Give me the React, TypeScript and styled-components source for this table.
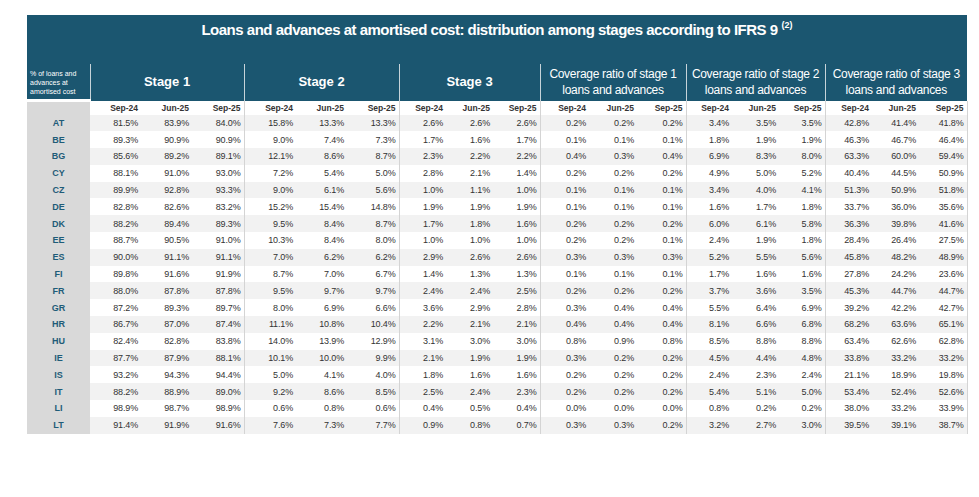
import React from "react";
import styled, { createGlobalStyle } from "styled-components";

const GlobalStyle = createGlobalStyle`
  html, body {
    margin: 0;
    padding: 0;
    background: #ffffff;
  }
  body {
    font-family: "Liberation Sans", Arial, sans-serif;
  }
`;

const HEAD_BG = "#1b5670";
const RULE = "#d4d4d4";

const Page = styled.div`
  padding: 15px 0 0 27px;
`;

const Table = styled.table`
  border-collapse: collapse;
  table-layout: fixed;
  width: 940px;
`;

const TitleCell = styled.th`
  background: ${HEAD_BG};
  color: #ffffff;
  height: 43px;
  padding: 6px 0 0 0;
  font-size: 15px;
  line-height: 18px;
  font-weight: 700;
  letter-spacing: -0.5px;
  text-align: center;
  vertical-align: top;

  sup {
    font-size: 9px;
    line-height: 0;
    letter-spacing: 0;
    margin-left: 4px;
    vertical-align: 7px;
  }
`;

const CornerCell = styled.th`
  background: ${HEAD_BG};
  color: #ffffff;
  height: 32px;
  padding: 0 0 3px 3px;
  font-size: 7px;
  font-weight: 400;
  line-height: 9px;
  text-align: left;
  vertical-align: bottom;
  border-bottom: 3px solid #ffffff;
`;

const GroupCell = styled.th<{ $wrap?: boolean }>`
  background: ${HEAD_BG};
  color: #ffffff;
  padding: 0;
  font-size: ${(p) => (p.$wrap ? "12px" : "13px")};
  font-weight: ${(p) => (p.$wrap ? 400 : 700)};
  letter-spacing: ${(p) => (p.$wrap ? "-0.3px" : "0")};
  line-height: 16px;
  text-align: center;
  vertical-align: middle;
  border-left: 1px solid #c7d3d9;
  &:first-of-type {
    border-left: none;
  }
`;

const SubRow = styled.tr`
  height: 14px;
`;

const SubCell = styled.th<{ $edge?: boolean }>`
  padding: 0 3px 0 0;
  font-size: 8.5px;
  font-weight: 700;
  color: #333333;
  text-align: right;
  vertical-align: middle;
  border-left: ${(p) => (p.$edge ? `1px solid ${RULE}` : "none")};
  &:last-child {
    border-right: 1px solid ${RULE};
  }
`;

const LabelBlank = styled.th`
  background: #d9d9d9;
  padding: 0;
`;

const Row = styled.tr<{ $shade: boolean }>`
  height: 16.8px;
  background: ${(p) => (p.$shade ? "#f2f2f2" : "#ffffff")};
`;

const Country = styled.th`
  background: #d9d9d9;
  color: #1f5c78;
  font-size: 9px;
  font-weight: 700;
  text-align: center;
  padding: 0;
  vertical-align: middle;
`;

const Value = styled.td<{ $edge?: boolean }>`
  padding: 0 3px 0 0;
  font-size: 9px;
  letter-spacing: -0.15px;
  color: #333333;
  text-align: right;
  vertical-align: middle;
  white-space: nowrap;
  border-left: ${(p) => (p.$edge ? `1px solid ${RULE}` : "none")};
  &:last-child {
    border-right: 1px solid ${RULE};
  }
`;

const colWidths = [
  63,
  51, 51, 52,
  52, 51, 52,
  47, 47, 47,
  49, 48, 49,
  46, 47, 46,
  47, 47, 48,
];

const groups: { label: React.ReactNode; wrap?: boolean }[] = [
  { label: "Stage 1" },
  { label: "Stage 2" },
  { label: "Stage 3" },
  { label: <>Coverage ratio of stage 1<br />loans and advances</>, wrap: true },
  { label: <>Coverage ratio of stage 2<br />loans and advances</>, wrap: true },
  { label: <>Coverage ratio of stage 3<br />loans and advances</>, wrap: true },
];

const periods = ["Sep-24", "Jun-25", "Sep-25"];

const rows: [string, number[]][] = [
  ["AT", [81.5, 83.9, 84.0, 15.8, 13.3, 13.3, 2.6, 2.6, 2.6, 0.2, 0.2, 0.2, 3.4, 3.5, 3.5, 42.8, 41.4, 41.8]],
  ["BE", [89.3, 90.9, 90.9, 9.0, 7.4, 7.3, 1.7, 1.6, 1.7, 0.1, 0.1, 0.1, 1.8, 1.9, 1.9, 46.3, 46.7, 46.4]],
  ["BG", [85.6, 89.2, 89.1, 12.1, 8.6, 8.7, 2.3, 2.2, 2.2, 0.4, 0.3, 0.4, 6.9, 8.3, 8.0, 63.3, 60.0, 59.4]],
  ["CY", [88.1, 91.0, 93.0, 7.2, 5.4, 5.0, 2.8, 2.1, 1.4, 0.2, 0.2, 0.2, 4.9, 5.0, 5.2, 40.4, 44.5, 50.9]],
  ["CZ", [89.9, 92.8, 93.3, 9.0, 6.1, 5.6, 1.0, 1.1, 1.0, 0.1, 0.1, 0.1, 3.4, 4.0, 4.1, 51.3, 50.9, 51.8]],
  ["DE", [82.8, 82.6, 83.2, 15.2, 15.4, 14.8, 1.9, 1.9, 1.9, 0.1, 0.1, 0.1, 1.6, 1.7, 1.8, 33.7, 36.0, 35.6]],
  ["DK", [88.2, 89.4, 89.3, 9.5, 8.4, 8.7, 1.7, 1.8, 1.6, 0.2, 0.2, 0.2, 6.0, 6.1, 5.8, 36.3, 39.8, 41.6]],
  ["EE", [88.7, 90.5, 91.0, 10.3, 8.4, 8.0, 1.0, 1.0, 1.0, 0.2, 0.2, 0.1, 2.4, 1.9, 1.8, 28.4, 26.4, 27.5]],
  ["ES", [90.0, 91.1, 91.1, 7.0, 6.2, 6.2, 2.9, 2.6, 2.6, 0.3, 0.3, 0.3, 5.2, 5.5, 5.6, 45.8, 48.2, 48.9]],
  ["FI", [89.8, 91.6, 91.9, 8.7, 7.0, 6.7, 1.4, 1.3, 1.3, 0.1, 0.1, 0.1, 1.7, 1.6, 1.6, 27.8, 24.2, 23.6]],
  ["FR", [88.0, 87.8, 87.8, 9.5, 9.7, 9.7, 2.4, 2.4, 2.5, 0.2, 0.2, 0.2, 3.7, 3.6, 3.5, 45.3, 44.7, 44.7]],
  ["GR", [87.2, 89.3, 89.7, 8.0, 6.9, 6.6, 3.6, 2.9, 2.8, 0.3, 0.4, 0.4, 5.5, 6.4, 6.9, 39.2, 42.2, 42.7]],
  ["HR", [86.7, 87.0, 87.4, 11.1, 10.8, 10.4, 2.2, 2.1, 2.1, 0.4, 0.4, 0.4, 8.1, 6.6, 6.8, 68.2, 63.6, 65.1]],
  ["HU", [82.4, 82.8, 83.8, 14.0, 13.9, 12.9, 3.1, 3.0, 3.0, 0.8, 0.9, 0.8, 8.5, 8.8, 8.8, 63.4, 62.6, 62.8]],
  ["IE", [87.7, 87.9, 88.1, 10.1, 10.0, 9.9, 2.1, 1.9, 1.9, 0.3, 0.2, 0.2, 4.5, 4.4, 4.8, 33.8, 33.2, 33.2]],
  ["IS", [93.2, 94.3, 94.4, 5.0, 4.1, 4.0, 1.8, 1.6, 1.6, 0.2, 0.2, 0.2, 2.4, 2.3, 2.4, 21.1, 18.9, 19.8]],
  ["IT", [88.2, 88.9, 89.0, 9.2, 8.6, 8.5, 2.5, 2.4, 2.3, 0.2, 0.2, 0.2, 5.4, 5.1, 5.0, 53.4, 52.4, 52.6]],
  ["LI", [98.9, 98.7, 98.9, 0.6, 0.8, 0.6, 0.4, 0.5, 0.4, 0.0, 0.0, 0.0, 0.8, 0.2, 0.2, 38.0, 33.2, 33.9]],
  ["LT", [91.4, 91.9, 91.6, 7.6, 7.3, 7.7, 0.9, 0.8, 0.7, 0.3, 0.3, 0.2, 3.2, 2.7, 3.0, 39.5, 39.1, 38.7]],
];

export default function App() {
  return (
    <Page>
      <GlobalStyle />
      <Table>
        <colgroup>
          {colWidths.map((w, i) => (
            <col key={i} style={{ width: w }} />
          ))}
        </colgroup>
        <thead>
          <tr>
            <TitleCell colSpan={19}>
              Loans and advances at amortised cost: distribution among stages according to IFRS 9<sup>(2)</sup>
            </TitleCell>
          </tr>
          <tr>
            <CornerCell>
              % of loans and
              <br />
              advances at
              <br />
              amortised cost
            </CornerCell>
            {groups.map((g, i) => (
              <GroupCell key={i} colSpan={3} $wrap={g.wrap}>
                {g.label}
              </GroupCell>
            ))}
          </tr>
          <SubRow>
            <LabelBlank />
            {groups.map((_, gi) =>
              periods.map((p, pi) => (
                <SubCell key={`${gi}-${pi}`} $edge={pi === 0 && gi > 0}>
                  {p}
                </SubCell>
              ))
            )}
          </SubRow>
        </thead>
        <tbody>
          {rows.map(([code, values], ri) => (
            <Row key={code} $shade={ri % 2 === 0}>
              <Country>{code}</Country>
              {values.map((v, vi) => (
                <Value key={vi} $edge={vi % 3 === 0 && vi > 0}>
                  {v.toFixed(1)}%
                </Value>
              ))}
            </Row>
          ))}
        </tbody>
      </Table>
    </Page>
  );
}
